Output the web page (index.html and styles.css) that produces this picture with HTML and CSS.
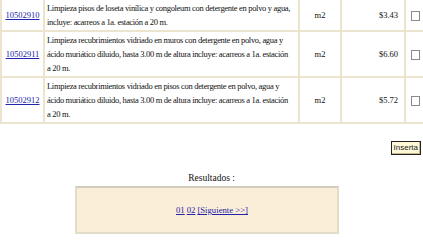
FILE: index.html
```html
<!DOCTYPE html>
<html>
<head>
<meta charset="utf-8">
<link rel="stylesheet" href="styles.css">
</head>
<body>
<table class="items">
  <colgroup>
    <col class="c-code"><col class="c-desc"><col class="c-unit"><col class="c-price"><col class="c-check">
  </colgroup>
  <tr class="r1">
    <td class="code"><a href="#">10502910</a></td>
    <td class="desc">Limpieza pisos de loseta vinílica y congoleum con detergente en polvo y agua,<br>incluye: acarreos a 1a. estación a 20 m.</td>
    <td class="unit">m2</td>
    <td class="price">$3.43</td>
    <td class="check"><span class="box"></span></td>
  </tr>
  <tr>
    <td class="code"><a href="#">10502911</a></td>
    <td class="desc">Limpieza recubrimientos vidriado en muros con detergente en polvo, agua y<br>ácido muriático diluido, hasta 3.00 m de altura incluye: acarreos a 1a. estación<br>a 20 m.</td>
    <td class="unit">m2</td>
    <td class="price">$6.60</td>
    <td class="check"><span class="box"></span></td>
  </tr>
  <tr>
    <td class="code"><a href="#">10502912</a></td>
    <td class="desc">Limpieza recubrimientos vidriado en pisos con detergente en polvo, agua y<br>ácido muriático diluido, hasta 3.00 m de altura incluye: acarreos a 1a. estación<br>a 20 m.</td>
    <td class="unit">m2</td>
    <td class="price">$5.72</td>
    <td class="check"><span class="box"></span></td>
  </tr>
</table>
<div class="actions"><button class="btn">Inserta</button></div>
<div class="results-title">Resultados :</div>
<div class="results">
  <a href="#">01</a> <a href="#">02</a> <a href="#">[Siguiente &gt;&gt;]</a>
</div>
</body>
</html>
```
FILE: styles.css
```css
html, body {
  margin: 0;
  padding: 0;
  background: #fff;
}
body {
  font-family: "Liberation Serif", "Times New Roman", serif;
  color: #111;
}
a { color: #2222aa; }
.items {
  width: 423px;
  border-collapse: collapse;
  table-layout: fixed;
  font-size: 8.5px;
  line-height: 14px;
  margin-top: -2px;
}
.c-code { width: 43px; }
.c-desc { width: 255px; }
.c-unit { width: 42px; }
.c-price { width: 64px; }
.c-check { width: 19px; }
.items td {
  border: 2px solid #ebe4cf;
  padding: 1px 2px;
  vertical-align: middle;
  white-space: nowrap;
  overflow: hidden;
}
.items td.desc { letter-spacing: -0.32px; }
.items td.code { text-align: center; padding: 1px; }
.items td.unit { text-align: center; }
.items td.price { text-align: right; padding-right: 6px; }
.items td.check { text-align: center; padding: 0 0 0 1px; }
.box {
  display: inline-block;
  width: 7px;
  height: 8px;
  border: 1px solid #8a8a8a;
  background: #fff;
  vertical-align: middle;
}
.actions {
  display: flex;
  justify-content: flex-end;
  padding: 17px 2px 0 0;
}
.btn {
  font-family: "Liberation Sans", Arial, sans-serif;
  font-size: 8px;
  height: 14px;
  padding: 0 2px;
  background: #fff8d8;
  border: 1px solid #222;
  box-shadow: inset -1px -1px 0 #c9b98a;
  color: #222;
  line-height: 12px;
}
.results-title {
  text-align: center;
  font-size: 9.5px;
  margin-top: 17px;
  line-height: 12px;
}
.results {
  margin: 2px 0 0 75px;
  width: 250px;
  height: 44px;
  padding-left: 10px;
  background: #fbeed9;
  border: 2px solid #e3dcc8;
  border-top-color: #d2ccbc;
  display: flex;
  align-items: center;
  justify-content: center;
  font-size: 8.7px;
  gap: 2px;
}
```
